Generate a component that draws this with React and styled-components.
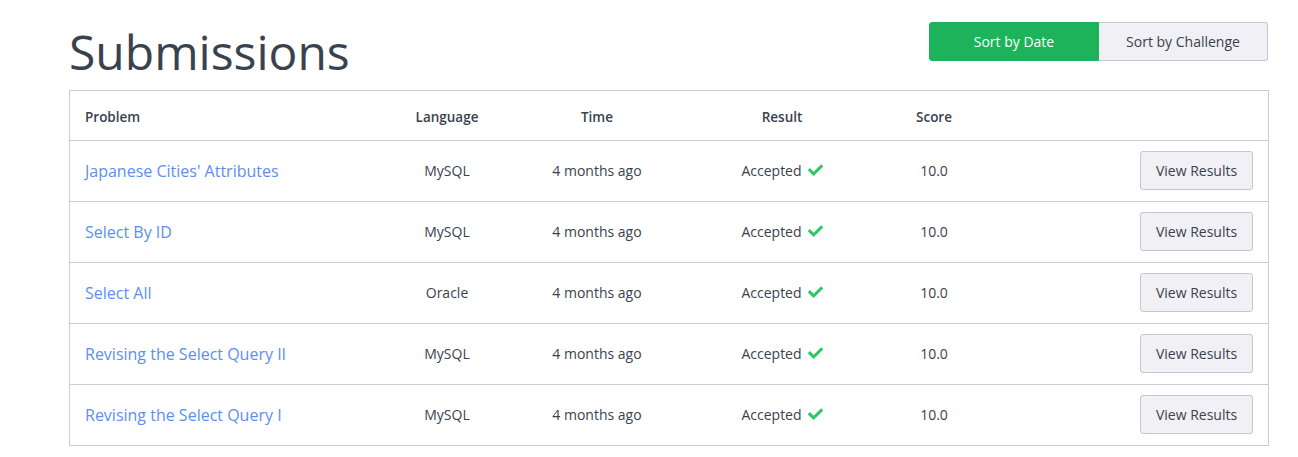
import React from "react";
import styled, { createGlobalStyle } from "styled-components";

const Global = createGlobalStyle`
  body {
    margin: 0;
    background: #ffffff;
    font-family: "Open Sans", "Liberation Sans", sans-serif;
    color: #39424e;
  }
`;

const Page = styled.div`
  width: 1200px;
  margin-left: 69px;
`;

const Header = styled.div`
  display: flex;
  justify-content: space-between;
  align-items: flex-start;
  padding-top: 21px;
`;

const Title = styled.h1`
  margin: 0;
  font-size: 48px;
  line-height: 62px;
  font-weight: 400;
  color: #39424e;
`;

const Toggle = styled.div`
  display: flex;
  margin-top: 1px;
  margin-right: 1px;
`;

const ToggleButton = styled.button`
  height: 39px;
  width: ${(p) => p.$w}px;
  font-family: "Open Sans", "Liberation Sans", sans-serif;
  font-size: 14px;
  border: 1px solid ${(p) => (p.$active ? "#1cb35a" : "#c2c7d0")};
  background: ${(p) => (p.$active ? "#1cb35a" : "#f0f0f5")};
  color: ${(p) => (p.$active ? "#ffffff" : "#39424e")};
  border-radius: ${(p) => (p.$first ? "3px 0 0 3px" : "0 3px 3px 0")};
  ${(p) => (p.$first ? "" : "border-left: none;")}
  padding: 0;
  cursor: pointer;
`;

const Table = styled.div`
  margin-top: 7px;
  border: 1px solid #c8ccd4;
`;

const Row = styled.div`
  display: grid;
  grid-template-columns: 327px 100px 200px 170px 134px 1fr;
  align-items: center;
  height: ${(p) => (p.$head ? 49 : 60)}px;
  border-top: ${(p) => (p.$first ? "none" : "1px solid #c8ccd4")};
`;

const HeadCell = styled.div`
  font-size: 13.5px;
  font-weight: 600;
  color: #39424e;
  text-align: ${(p) => (p.$left ? "left" : "center")};
  padding-left: ${(p) => (p.$left ? "15px" : "0")};
  padding-top: 2px;
`;

const ProblemLink = styled.a`
  padding-left: 15px;
  font-size: 16px;
  color: #5c8ff0;
  text-decoration: none;
`;

const Cell = styled.div`
  font-size: 14px;
  color: #39424e;
  text-align: center;
  margin-top: -2px;
`;

const ResultCell = styled.div`
  display: flex;
  justify-content: center;
  align-items: center;
  gap: 6px;
  font-size: 14px;
  color: #39424e;
  margin-top: -2px;
`;

const ActionCell = styled.div`
  display: flex;
  justify-content: flex-end;
  padding-right: 15px;
  margin-top: -2px;
`;

const ViewButton = styled.button`
  width: 113px;
  height: 39px;
  border: 1px solid #c2c7d0;
  border-radius: 3px;
  background: #f0f0f5;
  color: #39424e;
  font-family: "Open Sans", "Liberation Sans", sans-serif;
  font-size: 14px;
  padding: 0;
  cursor: pointer;
`;

const Check = () => (
  <svg width="15" height="12" viewBox="0 0 512 400" aria-hidden="true">
    <path
      fill="#2ec866"
      d="M173.9 389.8L7.5 223.4c-10-10-10-26.2 0-36.2l36.2-36.2c10-10 26.2-10 36.2 0L192 263.1 432.1 23c10-10 26.2-10 36.2 0l36.2 36.2c10 10 10 26.2 0 36.2L210.1 389.8c-10 10-26.2 10-36.2 0z"
    />
  </svg>
);

const rows = [
  ["Japanese Cities' Attributes", "MySQL"],
  ["Select By ID", "MySQL"],
  ["Select All", "Oracle"],
  ["Revising the Select Query II", "MySQL"],
  ["Revising the Select Query I", "MySQL"],
];

export default function App() {
  return (
    <>
      <Global />
      <Page>
        <Header>
          <Title>Submissions</Title>
          <Toggle>
            <ToggleButton $active $first $w={170}>Sort by Date</ToggleButton>
            <ToggleButton $w={169}>Sort by Challenge</ToggleButton>
          </Toggle>
        </Header>
        <Table>
          <Row $head $first>
            <HeadCell $left>Problem</HeadCell>
            <HeadCell>Language</HeadCell>
            <HeadCell>Time</HeadCell>
            <HeadCell>Result</HeadCell>
            <HeadCell>Score</HeadCell>
            <div />
          </Row>
          {rows.map(([name, lang]) => (
            <Row key={name}>
              <ProblemLink href="#">{name}</ProblemLink>
              <Cell>{lang}</Cell>
              <Cell>4 months ago</Cell>
              <ResultCell>
                Accepted <Check />
              </ResultCell>
              <Cell>10.0</Cell>
              <ActionCell>
                <ViewButton>View Results</ViewButton>
              </ActionCell>
            </Row>
          ))}
        </Table>
      </Page>
    </>
  );
}
